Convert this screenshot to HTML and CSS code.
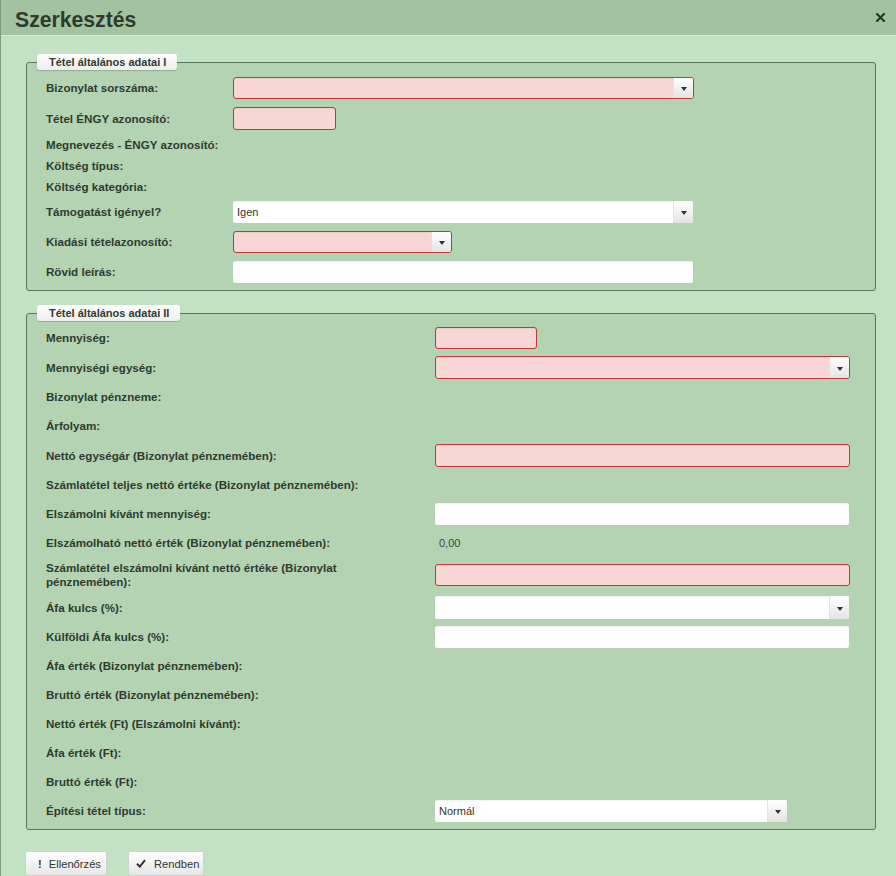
FILE: index.html
```html
<!DOCTYPE html>
<html lang="hu">
<head>
<meta charset="utf-8">
<title>Szerkesztés</title>
<link rel="stylesheet" href="styles.css">
</head>
<body>
<div class="dialog">
  <div class="titlebar">
    <h1 class="title">Szerkesztés</h1>
    <span class="close" aria-label="Bezárás">
      <svg width="9" height="9" viewBox="0 0 9 9"><path d="M1 1 L8 8 M8 1 L1 8" stroke="#2b372b" stroke-width="2.2" stroke-linecap="square"/></svg>
    </span>
  </div>
  <div class="content">
    <fieldset class="group">
      <legend class="legend">Tétel általános adatai I</legend>
      <div class="grid grid-1">
        <div class="label">Bizonylat sorszáma:</div>
        <div class="field"><div class="select invalid w461"><span class="val"></span><span class="arrow"></span></div></div>

        <div class="label">Tétel ÉNGY azonosító:</div>
        <div class="field"><div class="input invalid w103 h23"></div></div>

        <div class="label text-label">Megnevezés - ÉNGY azonosító:</div>
        <div class="field text-row"></div>

        <div class="label text-label">Költség típus:</div>
        <div class="field text-row"></div>

        <div class="label text-label">Költség kategória:</div>
        <div class="field text-row"></div>

        <div class="label">Támogatást igényel?</div>
        <div class="field"><div class="select w460"><span class="val">Igen</span><span class="arrow"></span></div></div>

        <div class="label">Kiadási tételazonosító:</div>
        <div class="field"><div class="select invalid w219"><span class="val"></span><span class="arrow"></span></div></div>

        <div class="label">Rövid leírás:</div>
        <div class="field"><div class="input w460"></div></div>
      </div>
    </fieldset>

    <fieldset class="group group-2">
      <legend class="legend">Tétel általános adatai II</legend>
      <div class="grid grid-2">
        <div class="label">Mennyiség:</div>
        <div class="field"><div class="input invalid w102"></div></div>

        <div class="label">Mennyiségi egység:</div>
        <div class="field"><div class="select invalid w415 h23"><span class="val"></span><span class="arrow"></span></div></div>

        <div class="label">Bizonylat pénzneme:</div>
        <div class="field"></div>

        <div class="label">Árfolyam:</div>
        <div class="field"></div>

        <div class="label">Nettó egységár (Bizonylat pénznemében):</div>
        <div class="field"><div class="input invalid w415 h23"></div></div>

        <div class="label">Számlatétel teljes nettó értéke (Bizonylat pénznemében):</div>
        <div class="field"></div>

        <div class="label">Elszámolni kívánt mennyiség:</div>
        <div class="field"><div class="input w414"></div></div>

        <div class="label">Elszámolható nettó érték (Bizonylat pénznemében):</div>
        <div class="field"><span class="value">0,00</span></div>

        <div class="label">Számlatétel elszámolni kívánt nettó értéke (Bizonylat pénznemében):</div>
        <div class="field"><div class="input invalid w415"></div></div>

        <div class="label">Áfa kulcs (%):</div>
        <div class="field"><div class="select w414 h23"><span class="val"></span><span class="arrow"></span></div></div>

        <div class="label">Külföldi Áfa kulcs (%):</div>
        <div class="field"><div class="input w414"></div></div>

        <div class="label">Áfa érték (Bizonylat pénznemében):</div>
        <div class="field"></div>

        <div class="label">Bruttó érték (Bizonylat pénznemében):</div>
        <div class="field"></div>

        <div class="label">Nettó érték (Ft) (Elszámolni kívánt):</div>
        <div class="field"></div>

        <div class="label">Áfa érték (Ft):</div>
        <div class="field"></div>

        <div class="label">Bruttó érték (Ft):</div>
        <div class="field"></div>

        <div class="label">Építési tétel típus:</div>
        <div class="field"><div class="select w352"><span class="val">Normál</span><span class="arrow"></span></div></div>
      </div>
    </fieldset>

    <div class="buttons">
      <button class="btn btn-check" type="button"><span class="excl">!</span>Ellenőrzés</button>
      <button class="btn btn-ok" type="button"><svg class="tick" width="10" height="9" viewBox="0 0 10 9"><path d="M1 4.8 L3.8 7.6 L9 1.2" fill="none" stroke="#333" stroke-width="2"/></svg>Rendben</button>
    </div>
  </div>
</div>
</body>
</html>
```

FILE: styles.css
```css
* { box-sizing: border-box; }

html, body {
  margin: 0;
  padding: 0;
  background: #c3e2c3;
}

body {
  font-family: "Liberation Sans", Arial, sans-serif;
  font-size: 11.6px;
  color: #2f3a2f;
}

.dialog {
  width: 896px;
  height: 876px;
  overflow: hidden;
  background: #c3e2c3;
  border-left: 1px solid #7e9a7e;
}

.titlebar {
  height: 36px;
  background: #a3c3a0;
  border-bottom: 1px solid #d7ebd5;
  display: flex;
  align-items: center;
  justify-content: space-between;
  padding: 4px 11px 0 14px;
}

.title {
  margin: 0;
  font-size: 21.2px;
  font-weight: bold;
  color: #2e3a2e;
}

.close {
  display: flex;
  align-items: center;
  margin-top: -4px;
}

.content {
  padding: 18px 20px 0 25px;
}

.group {
  margin: 0;
  padding: 0 0 7px 0;
  border: 1px solid #587658;
  border-radius: 3px;
  background: #b3d3b3;
  min-width: 0;
}

.group-2 {
  margin-top: 14px;
}

.legend {
  margin-left: 10px;
  padding: 0 11px 0 12px;
  height: 16px;
  line-height: 16px;
  background: linear-gradient(#ffffff, #eeeeee);
  border-radius: 3px;
  box-shadow: 0 1px 1px rgba(0,0,0,0.18);
  font-weight: bold;
  font-size: 11px;
  color: #2f3a2f;
}

.grid {
  display: grid;
  align-items: center;
  padding: 6px 0 0 19px;
}

.grid-1 {
  grid-template-columns: 187px 1fr;
  row-gap: 8px;
  padding-top: 7px;
}

.grid-2 {
  grid-template-columns: 389px 1fr;
  row-gap: 7px;
  padding-top: 6px;
}

.grid-2 .field {
  min-height: 22px;
  display: flex;
  align-items: center;
}

.grid-2 .label {
  max-width: 330px;
}

.label {
  font-weight: bold;
  color: #2f3a2f;
  line-height: 14px;
}

.text-label {
  line-height: 13px;
}

.text-row {
  min-height: 13px;
}

.value {
  padding-left: 4px;
  color: #3c463c;
  font-size: 11px;
}

.input,
.select {
  height: 22px;
  background: #ffffff;
  border-radius: 2px;
  box-shadow: inset 0 1px 1px rgba(0,0,0,0.05);
}

.h23 { height: 23px; }

.invalid {
  background: #f8d6d6;
  border: 1px solid #c0363a;
  border-radius: 3px;
}

.select {
  display: flex;
  align-items: stretch;
  overflow: hidden;
}

.select .val {
  flex: 1;
  display: flex;
  align-items: center;
  padding-left: 4px;
  font-size: 11px;
  color: #333333;
}

.select .arrow {
  width: 20px;
  position: relative;
  background: linear-gradient(#ffffff, #e4e4e4);
  border-left: 1px solid #e2e2e2;
}

.select .arrow::after {
  content: "";
  position: absolute;
  left: 50%;
  top: 50%;
  margin-left: -3px;
  margin-top: -1px;
  border-left: 3.5px solid transparent;
  border-right: 3.5px solid transparent;
  border-top: 4px solid #333333;
}

.w461 { width: 461px; }
.w460 { width: 460px; }
.w415 { width: 415px; }
.w414 { width: 414px; }
.w352 { width: 352px; }
.w219 { width: 219px; }
.w103 { width: 103px; }
.w102 { width: 102px; }

.buttons {
  display: flex;
  gap: 21px;
  margin-top: 21px;
  margin-left: -1px;
}

.btn {
  height: 25px;
  display: flex;
  align-items: center;
  white-space: nowrap;
  font-family: "Liberation Sans", Arial, sans-serif;
  font-size: 11.2px;
  color: #333333;
  background: linear-gradient(#ffffff, #e6e6e6);
  border: 1px solid #c9d6c9;
  border-radius: 2px;
  box-shadow: 0 1px 1px rgba(0,0,0,0.1);
  padding: 0 6px 0 12px;
}

.btn-check { width: 82px; }
.btn-ok { width: 76px; padding-left: 7px; }

.excl {
  font-weight: bold;
  flex-shrink: 0;
  margin-right: 7px;
}

.tick {
  flex-shrink: 0;
  margin-right: 8px;
}
```
